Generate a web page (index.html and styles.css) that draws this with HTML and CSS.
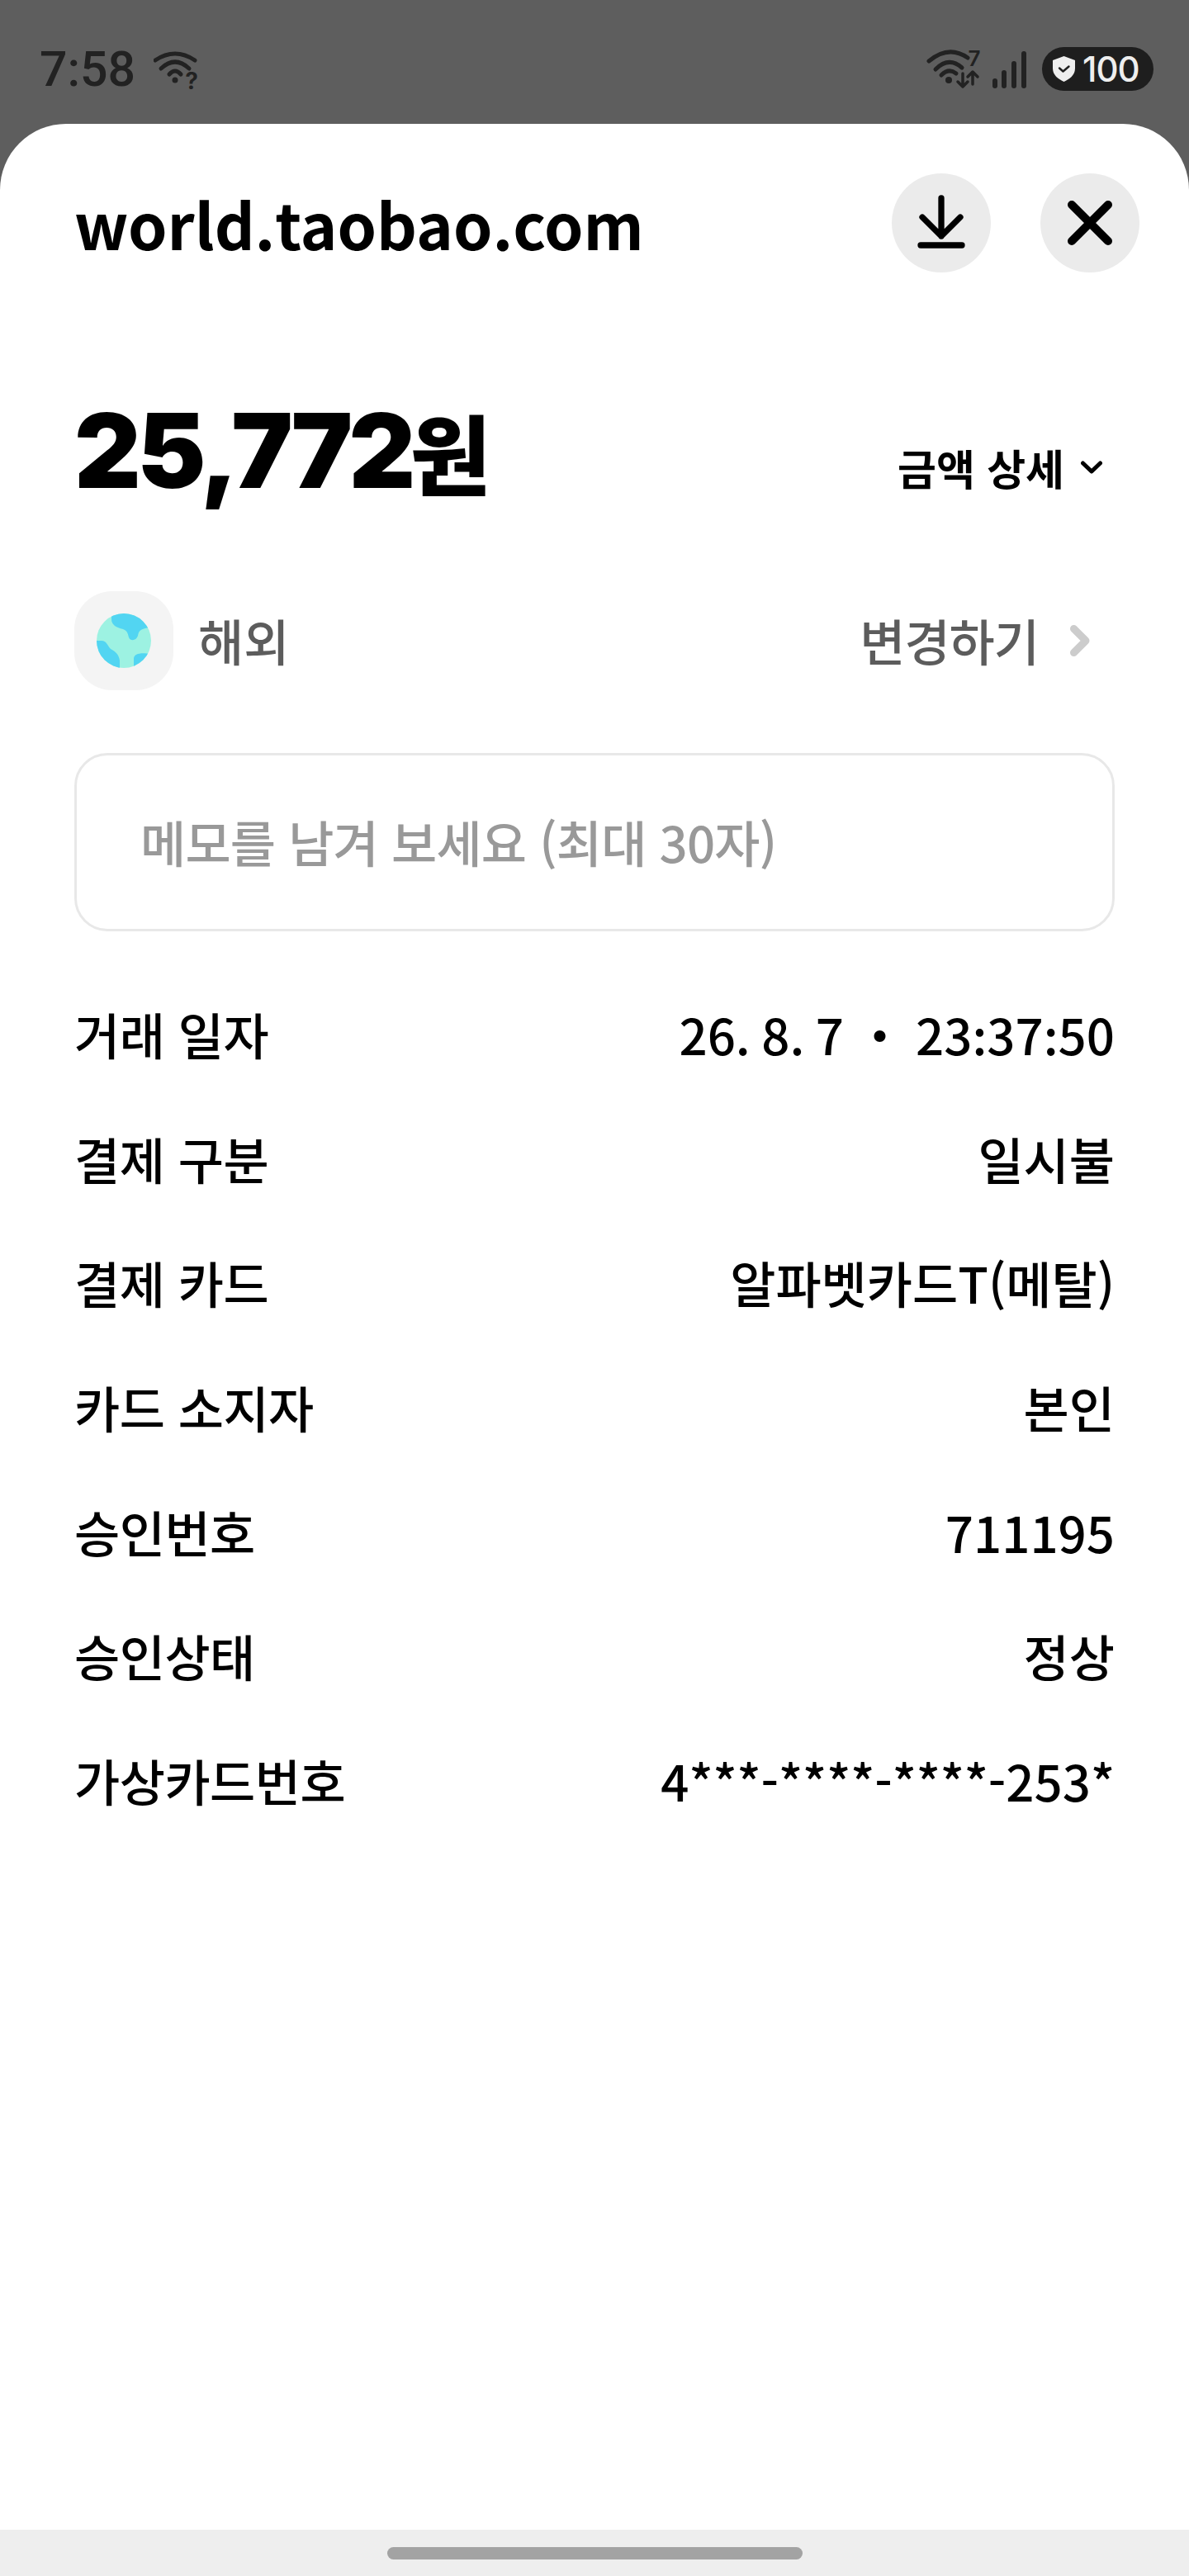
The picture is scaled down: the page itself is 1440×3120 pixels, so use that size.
FILE: index.html
```html
<!DOCTYPE html>
<html lang="ko">
<head>
    <meta charset="UTF-8">
    <meta name="viewport" content="width=device-width, initial-scale=1.0">
    <title>world.taobao.com</title>
    <link rel="stylesheet" href="styles.css">
</head>
<body>
    <div class="status-bar">
        <div class="status-left">
            <span class="clock">7:58</span>
            <svg class="wifi-unknown" viewBox="186 50 56 66" fill="none" stroke="#222" stroke-width="5" stroke-linecap="round">
                <path d="M188 71Q212 55 236 71"/>
                <path d="M195 81Q212 65 229 81"/>
                <path d="M205 88Q212 80 219 88"/>
                <circle cx="212" cy="95" r="3.5" fill="#222" stroke="none"/>
                <text class="wifi-q" x="232" y="106" text-anchor="middle" stroke="none" fill="#222">?</text>
            </svg>
        </div>
        <div class="status-right">
            <svg class="wifi-seven" viewBox="1120 50 70 66" fill="none" stroke="#222" stroke-width="5" stroke-linecap="round" stroke-linejoin="round">
                <path d="M1125 72Q1149 52 1172 68"/>
                <path d="M1133 82Q1149 66 1165 80"/>
                <path d="M1140 89Q1149 80 1158 87"/>
                <circle cx="1149" cy="95" r="4" fill="#222" stroke="none"/>
                <text class="wifi-g" x="1180" y="78" text-anchor="middle" stroke="none" fill="#222">7</text>
                <path d="M1166 87V102M1160 97L1166 103L1172 97" stroke-width="3.5"/>
                <path d="M1178 100V86M1172 91L1178 85L1184 91" stroke-width="3.5"/>
            </svg>
            <svg class="signal" viewBox="1200 58 46 50" fill="#222">
                <rect x="1202" y="93" width="6" height="12" rx="3"/>
                <rect x="1213" y="83" width="6" height="22" rx="3"/>
                <rect x="1225" y="72" width="6" height="33" rx="3"/>
                <rect x="1237" y="60" width="6" height="45" rx="3"/>
            </svg>
            <div class="battery">
                <svg class="shield" viewBox="0 0 27 31">
                    <path d="M13.5 0L27 5V15C27 23 20 28 13.5 31C7 28 0 23 0 15V5Z" fill="#eee"/>
                    <path d="M8 14.5L12.5 18.5L19.5 12.5" fill="none" stroke="#1e1e1e" stroke-width="2.4" stroke-linecap="round" stroke-linejoin="round"/>
                </svg>
                <span>100</span>
            </div>
        </div>
    </div>

    <div class="sheet">
        <div class="sheet-header">
            <h1>world.taobao.com</h1>
            <div class="header-buttons">
                <button class="round-btn">
                    <svg viewBox="0 0 120 120" fill="none" stroke="#000" stroke-width="7.3" stroke-linecap="round" stroke-linejoin="round">
                        <path d="M60 30V76M37 53L60 76L83 53"/>
                        <path d="M35 87H85"/>
                    </svg>
                </button>
                <button class="round-btn">
                    <svg viewBox="0 0 120 120" fill="none" stroke="#000" stroke-width="10" stroke-linecap="round">
                        <path d="M38 38L82 82M82 38L38 82"/>
                    </svg>
                </button>
            </div>
        </div>

        <div class="amount-row">
            <div class="amount"><span class="amount-num">25,772</span><span class="amount-unit">원</span></div>
            <div class="amount-detail">
                <span>금액 상세</span>
                <svg viewBox="0 0 26 16" fill="none" stroke="#000" stroke-width="5" stroke-linecap="round" stroke-linejoin="round">
                    <path d="M2.5 3L13 13L23.5 3"/>
                </svg>
            </div>
        </div>

        <div class="category-row">
            <div class="category-icon">
                <svg viewBox="0 0 66 66">
                    <defs><clipPath id="globeClip"><ellipse cx="33" cy="33" rx="33" ry="33"/></clipPath></defs>
                    <g clip-path="url(#globeClip)">
                        <rect width="66" height="66" fill="#9df2e2"/>
                        <path d="M18 0V7C18 14 24 17 32 19C38 21 38 26 39 29C41 34 48 33 50 27C51 21 53 18 66 17V0Z" fill="#52d5f2"/>
                        <path d="M0 33H6C12 33 13 39 17 43C23 46 27 50 28 57V66H0Z" fill="#52d5f2"/>
                        <path d="M45 66V54C46 49 52 47 66 49V66Z" fill="#52d5f2"/>
                    </g>
                </svg>
            </div>
            <span class="category-name">해외</span>
            <span class="category-change">변경하기</span>
            <svg class="chevron-right" viewBox="0 0 24 38" fill="none" stroke="#ccc" stroke-width="9" stroke-linecap="round" stroke-linejoin="round">
                <path d="M4.5 4.5L19 19L4.5 33.5"/>
            </svg>
        </div>

        <div class="memo">메모를 남겨 보세요 (최대 30자)</div>

        <div class="detail-list">
            <div class="detail-row"><span>거래 일자</span><span class="detail-value">26. 8. 7 <i>・</i> 23:37:50</span></div>
            <div class="detail-row"><span>결제 구분</span><span class="detail-value">일시불</span></div>
            <div class="detail-row"><span>결제 카드</span><span class="detail-value">알파벳카드T(메탈)</span></div>
            <div class="detail-row"><span>카드 소지자</span><span class="detail-value">본인</span></div>
            <div class="detail-row"><span>승인번호</span><span class="detail-value">711195</span></div>
            <div class="detail-row"><span>승인상태</span><span class="detail-value">정상</span></div>
            <div class="detail-row"><span>가상카드번호</span><span class="detail-value">4***-****-****-253*</span></div>
        </div>
    </div>

    <div class="nav-bar"><div class="home-pill"></div></div>
</body>
</html>
```

FILE: styles.css
```css
* {
    box-sizing: border-box;
}
body {
    margin: 0;
    height: 3120px;
    display: flex;
    flex-direction: column;
    background-color: #5e5e5e;
    color: #000;
    font-family: "Noto Sans CJK KR", "Noto Sans", sans-serif;
}
.status-bar {
    height: 150px;
    flex: none;
    display: flex;
    justify-content: space-between;
    align-items: flex-start;
    padding: 57px 43px 0 48px;
}
.status-left,
.status-right {
    display: flex;
    align-items: center;
    height: 53px;
}
.clock {
    font-family: "Roboto", sans-serif;
    font-size: 59px;
    font-weight: 500;
    line-height: 53px;
    color: #222;
    width: 138px;
}
.wifi-unknown {
    width: 56px;
    height: 66px;
    margin-top: 3px;
}
.wifi-q {
    font-family: "Inter", sans-serif;
    font-size: 28px;
    font-weight: 700;
}
.wifi-g {
    font-family: "Inter", sans-serif;
    font-size: 26px;
    font-weight: 600;
}
.wifi-seven {
    width: 70px;
    height: 66px;
    margin-top: 3px;
}
.signal {
    width: 46px;
    height: 50px;
    margin: 3px 16px 0 10px;
}
.battery {
    width: 135px;
    height: 53px;
    border-radius: 27px;
    background-color: #1e1e1e;
    color: #eee;
    display: flex;
    align-items: center;
    padding-left: 13px;
    font-family: "Inter", sans-serif;
    font-size: 42px;
    font-weight: 500;
    letter-spacing: -1px;
}
.shield {
    width: 27px;
    height: 31px;
    margin-right: 9px;
}
.sheet {
    flex: 1;
    background-color: #fff;
    border-radius: 80px 80px 0 0;
    padding-top: 60px;
}
.sheet-header {
    display: flex;
    justify-content: space-between;
    align-items: center;
    margin: 0 60px 0 90px;
    height: 120px;
}
h1 {
    margin: 0;
    font-size: 76px;
    font-weight: 700;
    line-height: 120px;
}
.header-buttons {
    display: flex;
    gap: 60px;
}
.round-btn {
    width: 120px;
    height: 120px;
    padding: 0;
    border: none;
    border-radius: 50%;
    background-color: #ebebeb;
}
.round-btn svg {
    display: block;
    width: 120px;
    height: 120px;
}
.amount-row {
    display: flex;
    justify-content: space-between;
    align-items: center;
    margin: 166px 90px 0;
    height: 100px;
}
.amount {
    display: flex;
    align-items: center;
    line-height: 100px;
}
.amount-num {
    font-family: "Inter", sans-serif;
    font-size: 125px;
    font-weight: 900;
    letter-spacing: -4.5px;
}
.amount-unit {
    font-size: 106px;
    font-weight: 900;
    margin-left: -2px;
}
.amount-detail {
    display: flex;
    align-items: center;
    gap: 20px;
    font-size: 51px;
    font-weight: 700;
    margin-top: 40px;
    margin-right: 15px;
}
.amount-detail svg {
    width: 26px;
    height: 16px;
}
.category-row {
    display: flex;
    align-items: center;
    margin: 120px 90px 0;
    height: 120px;
    font-size: 60px;
    color: #5c5c5c;
}
.category-icon {
    width: 120px;
    height: 120px;
    flex: none;
    border-radius: 46px;
    background-color: #f4f4f4;
    display: flex;
    align-items: center;
    justify-content: center;
}
.category-icon svg {
    width: 66px;
    height: 66px;
}
.category-name {
    margin-left: 30px;
    flex: 1;
    font-weight: 500;
    padding-bottom: 4px;
}
.category-change {
    font-weight: 500;
    letter-spacing: -1px;
    padding-bottom: 4px;
}
.chevron-right {
    width: 24px;
    height: 38px;
    margin: 0 30px 0 38px;
}
.memo {
    margin: 76px 90px 0;
    height: 216px;
    border: 3px solid #e8e8e8;
    border-radius: 40px;
    padding: 0 0 3px 77px;
    display: flex;
    align-items: center;
    font-size: 60px;
    font-weight: 500;
    letter-spacing: -0.8px;
    color: #999;
}
.detail-list {
    margin: 48px 90px 0;
    font-size: 60px;
    font-weight: 500;
    letter-spacing: -0.5px;
}
.detail-row {
    height: 150.7px;
    display: flex;
    justify-content: space-between;
    align-items: center;
}
.detail-value {
    letter-spacing: 0;
}
.detail-value i {
    font-style: normal;
}
.nav-bar {
    height: 56px;
    flex: none;
    background-color: #eee;
    display: flex;
    justify-content: center;
    padding-top: 21px;
}
.home-pill {
    width: 503px;
    height: 15px;
    border-radius: 8px;
    background-color: #a3a3a3;
}
```
